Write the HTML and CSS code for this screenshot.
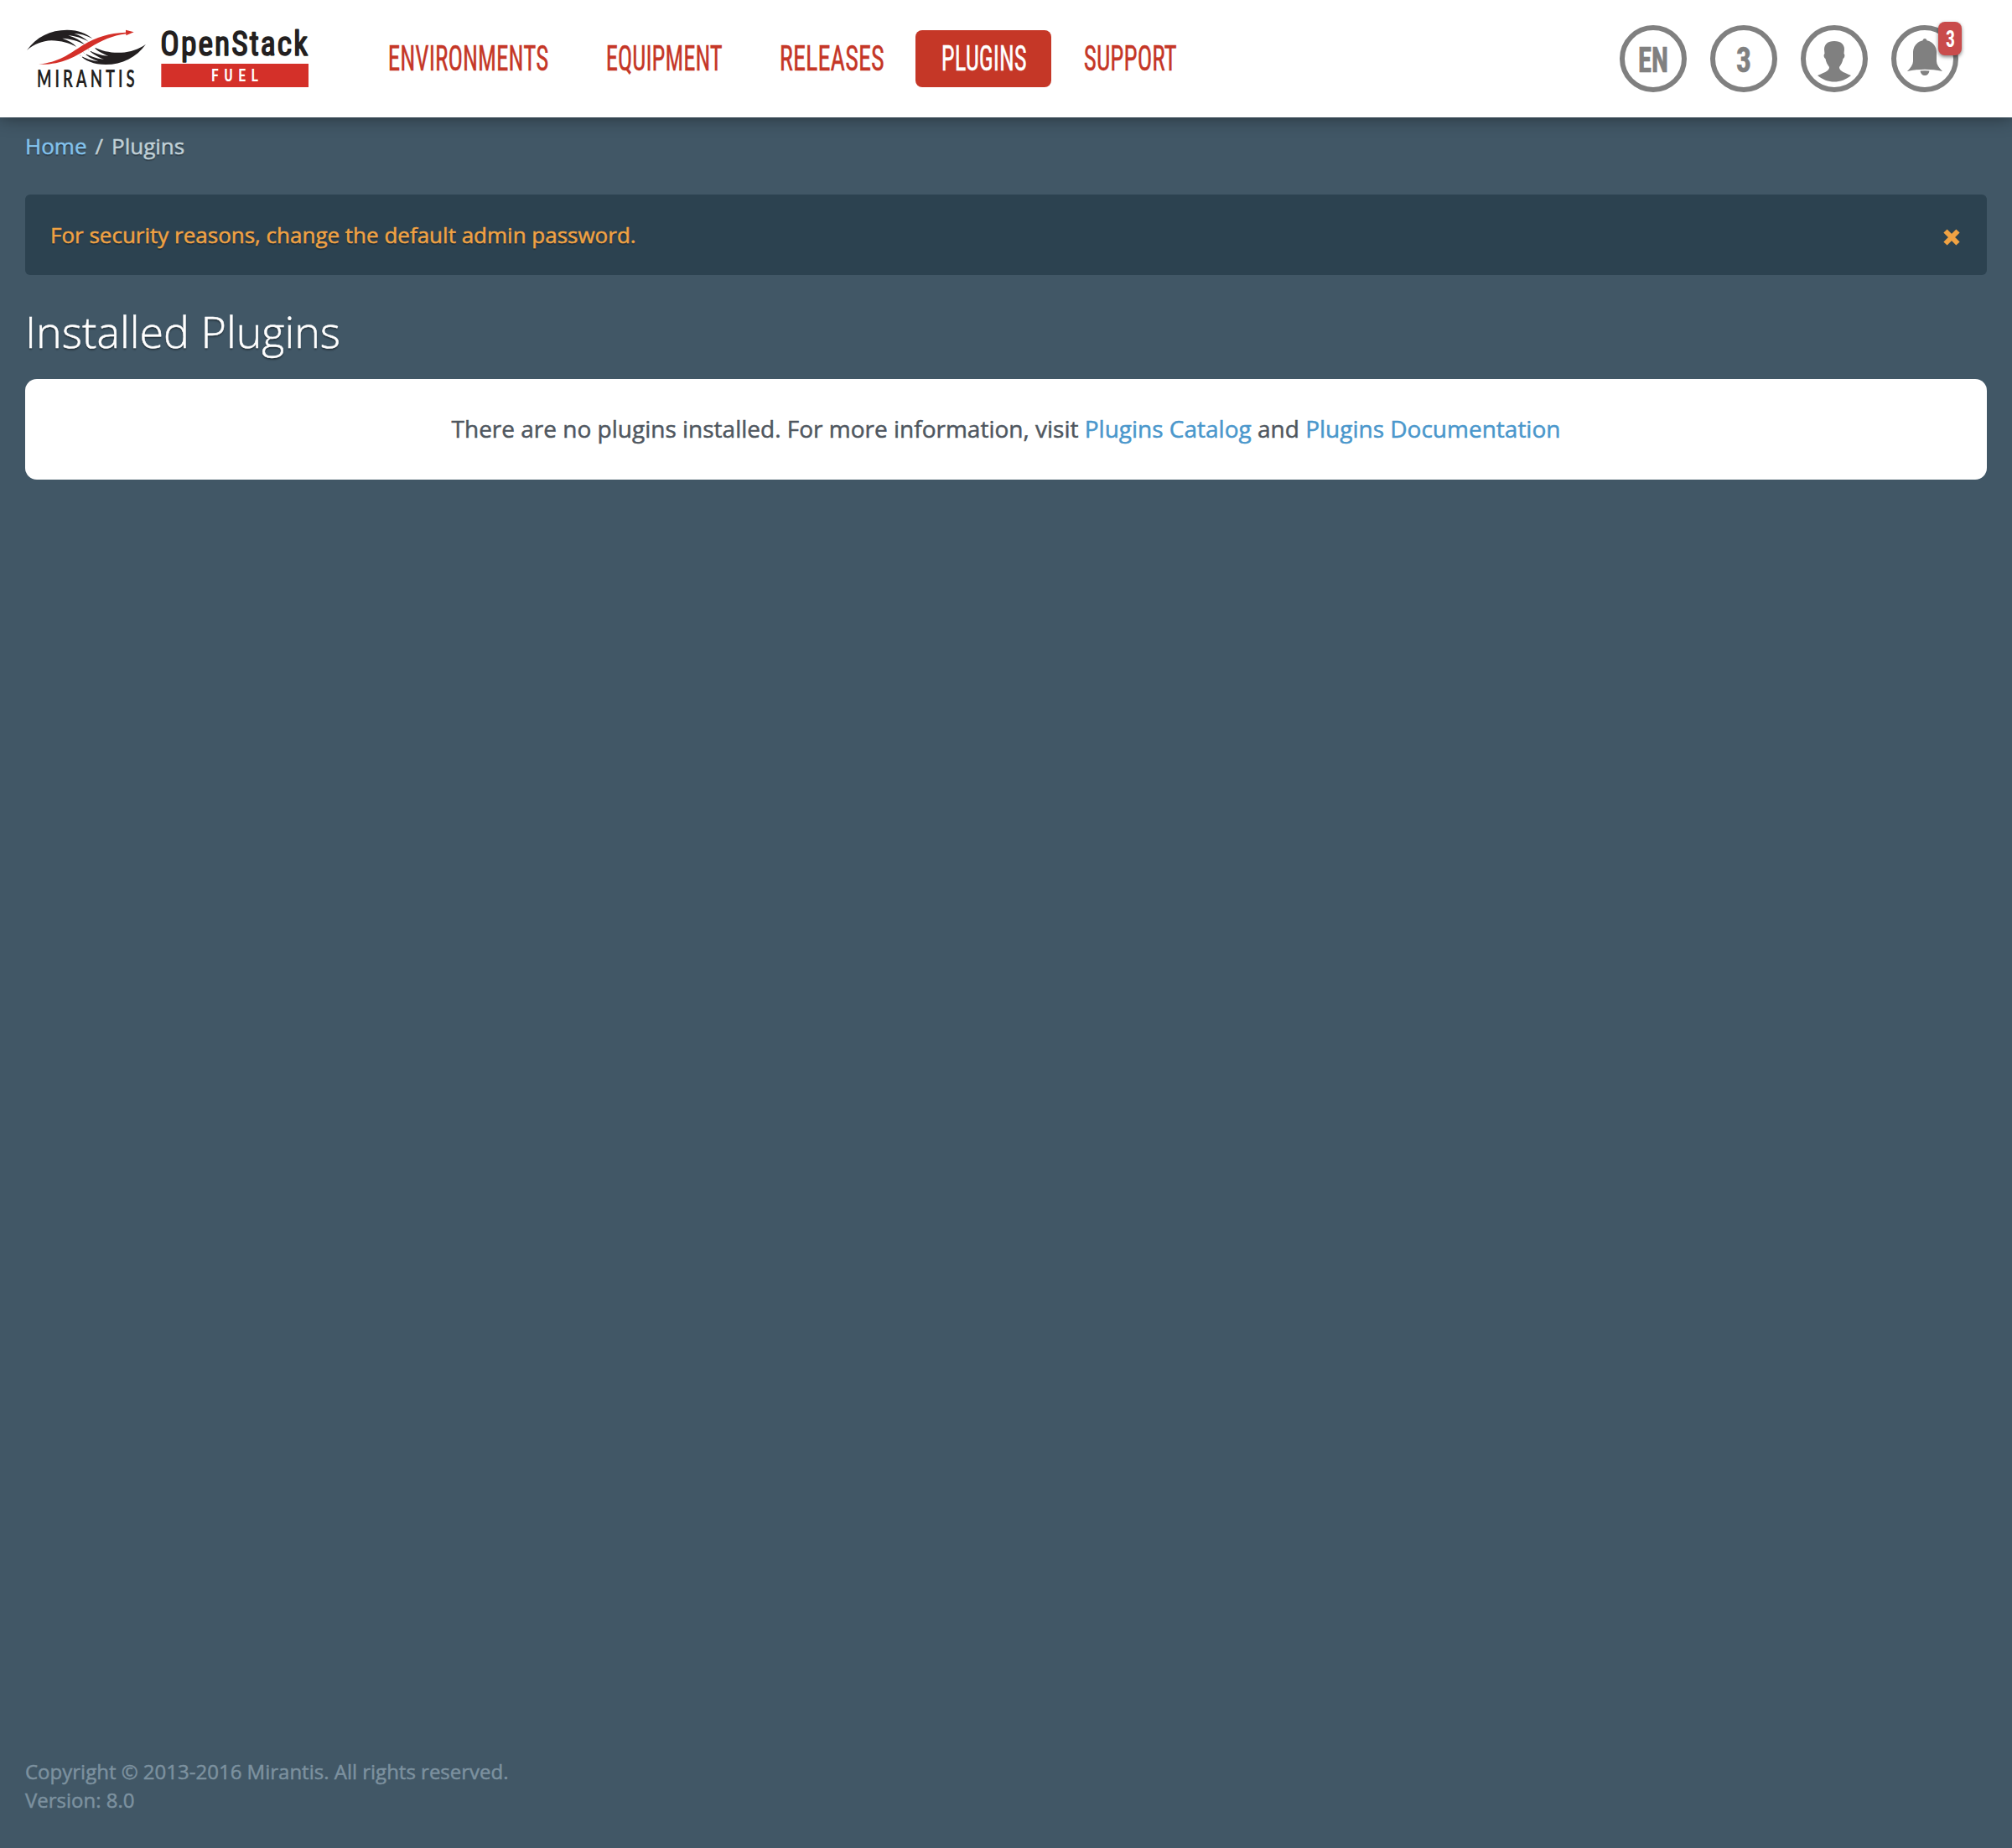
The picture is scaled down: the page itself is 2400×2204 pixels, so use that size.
FILE: index.html
```html
<!DOCTYPE html>
<html lang="en">
<head>
<meta charset="utf-8">
<title>Plugins - Fuel</title>
<link rel="stylesheet" href="styles.css">
</head>
<body>
<header class="header">
  <svg class="logo" viewBox="0 0 1110 300" role="img" aria-label="Mirantis OpenStack Fuel">
    <g fill="#231f20">
      <path d="M36 120C70 72 120 47 180 47C222 47 250 60 271 78C248 66 225 61 205 60C225 66 243 76 258 90C236 77 208 68 184 67C208 74 229 86 243 99C220 87 190 78 163 77C184 84 202 94 214 108C188 94 160 86 124 85C92 86 62 98 36 120Z"/>
      <path d="M462 98C428 145 378 171 318 171C276 171 244 158 224 136C246 150 268 158 292 160C270 152 250 140 236 126C258 140 284 150 312 152C290 144 268 130 254 116C276 130 300 138 328 140C306 132 286 122 276 108C306 124 340 130 374 128C406 126 436 116 462 98Z"/>
    </g>
    <path fill="none" stroke="#fff" stroke-width="6" d="M196 134C236 112 276 78 330 66M224 146C262 124 296 92 340 78"/>
    <path fill="#d43029" d="M78 170C150 163 186 134 236 102C286 72 330 58 390 56L390 47L419 55L391 67L391 61C340 68 306 84 262 110C208 143 160 173 78 170Z"/>
    <text class="logo-mirantis" transform="translate(72 252) scale(.66 1)" textLength="530">MIRANTIS</text>
    <text class="logo-openstack" transform="translate(514 137) scale(.92 1)" textLength="573">OpenStack</text>
    <rect x="517" y="168" width="527" height="84" fill="#d43029"/>
    <text class="logo-fuel" transform="translate(697 232) scale(.76 1)" textLength="220">FUEL</text>
  </svg>
  <nav class="nav">
    <a class="nav-link" href="#"><svg width="192" height="68"><text x=".8" y="48.300" textLength="191.500" lengthAdjust="spacingAndGlyphs">ENVIRONMENTS</text></svg></a>
    <a class="nav-link" href="#"><svg width="139" height="68"><text x=".8" y="48.300" textLength="139" lengthAdjust="spacingAndGlyphs">EQUIPMENT</text></svg></a>
    <a class="nav-link" href="#"><svg width="125" height="68"><text x=".8" y="48.300" textLength="125" lengthAdjust="spacingAndGlyphs">RELEASES</text></svg></a>
    <a class="nav-link active" href="#"><svg width="102" height="68"><text x=".8" y="48.300" textLength="102" lengthAdjust="spacingAndGlyphs">PLUGINS</text></svg></a>
    <a class="nav-link" href="#"><svg width="111" height="68"><text x=".8" y="48.300" textLength="111" lengthAdjust="spacingAndGlyphs">SUPPORT</text></svg></a>
  </nav>
  <div class="tools">
    <a class="tool" href="#"><svg viewBox="0 0 80 80"><text x="22" y="56" textLength="36" lengthAdjust="spacingAndGlyphs">EN</text></svg></a>
    <a class="tool" href="#"><svg viewBox="0 0 80 80"><text x="31" y="56" textLength="18" lengthAdjust="spacingAndGlyphs">3</text></svg></a>
    <a class="tool" href="#"><svg viewBox="0 0 80 80"><path d="M40 19C48 19 52 23 52 29L51.500 34C53 35 52.500 39 50.500 40C50 44 48 47 46 50C46 54 49 55.500 60 60C54 65 47 67.500 40 67.500C33 67.500 26 65 20 60C31 55.500 34 54 34 50C32 47 30 44 29.500 40C27.500 39 27 35 28.500 34L28 29C28 23 32 19 40 19Z"/></svg></a>
    <a class="tool" href="#"><svg viewBox="0 0 80 80"><path d="M40 16C41.500 16 42.300 17 42.500 18.300C50 20 54 26 54 32V43C54 47 57 51 61 55C47 52 33 52 19 55C23 51 26 47 26 43V32C26 26 30 20 37.500 18.300C37.700 17 38.500 16 40 16ZM34.500 54.500Q40 53.800 45.500 54.500C45 58 43 60 40 60C37 60 35 58 34.500 54.500Z"/></svg>
      <span class="badge"><svg width="28" height="40"><text x="9" y="30" textLength="11" lengthAdjust="spacingAndGlyphs">3</text></svg></span></a>
  </div>
</header>
<main class="main">
  <ol class="breadcrumb"><li><a href="#">Home</a></li><li class="sep">/</li><li>Plugins</li></ol>
  <div class="alert"><span>For security reasons, change the default admin password.</span>
    <svg class="close" viewBox="0 0 20 20"><path d="M2.500 2.500L17.500 17.500M17.500 2.500L2.500 17.500"/></svg></div>
  <h1 class="title">Installed Plugins</h1>
  <section class="card">There are no plugins installed. For more information, visit <a href="#">Plugins Catalog</a> and <a href="#">Plugins Documentation</a></section>
</main>
<footer class="footer">
  <div>Copyright © 2013-2016 Mirantis. All rights reserved.</div>
  <div>Version: 8.0</div>
</footer>
</body>
</html>
```
FILE: styles.css
```css
* { box-sizing: border-box; }
body {
  margin: 0;
  min-height: 2204px;
  display: flex;
  flex-direction: column;
  background: #415766;
  font-family: "Open Sans", "Noto Sans", sans-serif;
  font-size: 26px;
  -webkit-text-stroke: .5px currentColor;
}
a { text-decoration: none; }
svg { display: block; overflow: visible; }
.header {
  height: 140px;
  padding: 20px 64px 20px 20px;
  display: flex;
  align-items: flex-start;
  background: #fff;
  box-shadow: 0 0 20px rgba(0, 0, 0, .45);
  -webkit-text-stroke: 0;
}
.logo { width: 370px; height: 100px; }
.logo text { font-family: Roboto, "Liberation Sans", sans-serif; fill: #231f20; }
.logo .logo-mirantis { font-family: Lato, sans-serif; font-size: 84px; font-weight: 700; }
.logo .logo-openstack {
  font-size: 122px;
  font-weight: 400;
  font-stretch: 75%;
  stroke: #231f20;
  stroke-width: 5px;
  stroke-linejoin: round;
}
.logo .logo-fuel { font-size: 60px; font-weight: 700; fill: #fff; }
.nav { display: flex; gap: 8px; margin: 16px 0 0 42px; }
.nav-link { height: 68px; padding: 0 30px; border-radius: 8px; }
.nav-link text {
  font: 400 42px Roboto, sans-serif;
  font-stretch: 75%;
  fill: #c53727;
  stroke: #c53727;
  stroke-width: .4px;
}
.nav-link.active { background: #c53727; }
.nav-link.active text { fill: #fff; stroke: #fff; }
.tools { display: flex; gap: 28px; margin: 10px 0 0 auto; }
.tool {
  position: relative;
  width: 80px;
  height: 80px;
  border: 6px solid #808080;
  border-radius: 50%;
}
.tool > svg { width: 80px; height: 80px; margin: -6px; fill: #808080; }
.tool text {
  font: 700 43px Roboto, sans-serif;
  font-stretch: 75%;
  stroke: #808080;
  stroke-width: .6px;
}
.tool .badge {
  position: absolute;
  top: -10px;
  left: 50px;
  width: 28px;
  height: 40px;
  border-radius: 8px;
  background: #c94b4b;
  box-shadow: 0 2px 4px rgba(0, 0, 0, .5);
}
.tool .badge text { font-size: 27px; fill: #fff; stroke: none; }
.main { padding: 0 30px; flex: 1; }
.breadcrumb {
  list-style: none;
  margin: 0;
  padding: 16px 0 0;
  height: 92px;
  display: flex;
  line-height: 36px;
  color: #c0d0d6;
  text-shadow: 0 2px 1px rgba(0, 0, 0, .3);
}
.breadcrumb a { color: #83c2ec; }
.sep { padding: 0 10px; }
.alert {
  height: 96px;
  padding: 0 32px 0 30px;
  display: flex;
  justify-content: space-between;
  align-items: center;
  border-radius: 6px;
  background: #2c4250;
  color: #f0a243;
  text-shadow: 0 2px 1px rgba(0, 0, 0, .3);
}
.close { width: 20px; height: 20px; margin-top: 6px; stroke: #f0a243; stroke-width: 6px; }
.title {
  height: 124px;
  margin: 0;
  padding-top: 32px;
  font-size: 52px;
  line-height: 70px;
  font-weight: 300;
  color: #fff;
  text-shadow: 0 2px 2px rgba(0, 0, 0, .45);
}
.card {
  height: 120px;
  border-radius: 14px;
  background: #fff;
  color: #4f5760;
  font-size: 28px;
  line-height: 118px;
  text-align: center;
}
.card a { color: #4a97cc; }
.footer {
  height: 110px;
  padding: 2px 30px 0;
  font-size: 24px;
  line-height: 34px;
  color: #7c919f;
}
```
